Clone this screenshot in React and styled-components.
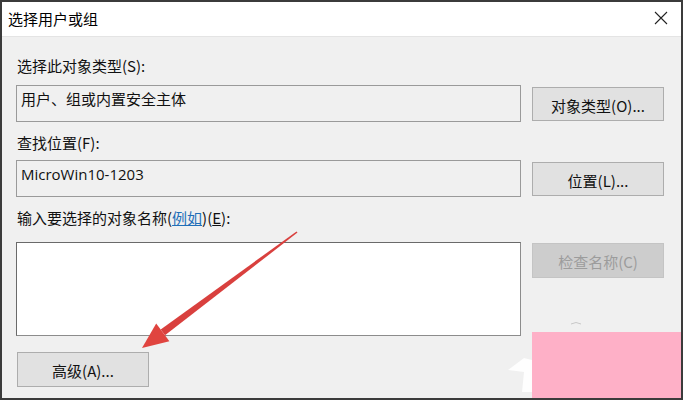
import React from 'react'
import styled, { createGlobalStyle } from 'styled-components'

const Global = createGlobalStyle`
  html, body { margin: 0; padding: 0; background: #3a3a3a; }
  body { font-family: "Noto Sans CJK SC", "Noto Sans", sans-serif; }
`;

const Window = styled.div`
  position: relative;
  width: 683px;
  height: 400px;
  box-sizing: border-box;
  border: 2px solid #3b3b3b;
  background: #f0f0f0;
  display: flex;
  flex-direction: column;
  overflow: hidden;
  color: #111;
`;

const TitleBar = styled.div`
  height: 34px;
  flex: none;
  background: #ffffff;
  border-bottom: 1px solid #e4e4e4;
  display: flex;
  align-items: center;
  justify-content: space-between;
  padding: 0 13px 0 6px;
`;

const Title = styled.div`
  font-size: 15px;
  line-height: 20px;
  color: #000;
`;

const Close = styled.svg`
  width: 14px;
  height: 14px;
  margin-top: -2px;
`;

const Body = styled.div`
  flex: 1;
  padding: 0 17px 0 14px;
  display: flex;
  flex-direction: column;
`;

const Label = styled.div`
  font-size: 15px;
  line-height: 20px;
  margin-top: ${p => p.top}px;
  padding-left: 1px;
`;

const Link = styled.span`
  color: #1f6fb8;
  text-decoration: underline;
`;

const Key = styled.span`
  text-decoration: underline;
`;

const Row = styled.div`
  display: flex;
  gap: 11px;
  align-items: flex-start;
  margin-top: ${p => p.top}px;
`;

const Field = styled.div`
  width: 505px;
  height: ${p => p.h || 37}px;
  box-sizing: border-box;
  border: 1px solid ${p => (p.edit ? '#8c8c8c' : '#9a9a9a')};
  border-top-color: ${p => (p.edit ? '#6a6a6a' : '#9a9a9a')};
  border-left-color: ${p => (p.edit ? '#6a6a6a' : '#9a9a9a')};
  background: ${p => (p.edit ? '#ffffff' : '#f0f0f0')};
  font-family: "Open Sans", "Noto Sans CJK SC", sans-serif;
  font-size: 15px;
  line-height: 20px;
  padding: 3px 4px;
`;

const Button = styled.div`
  width: 132px;
  height: ${p => p.h || 34}px;
  box-sizing: border-box;
  margin-top: ${p => p.mt || 0}px;
  border: 1px solid ${p => (p.disabled ? '#c4c4c4' : '#adadad')};
  background: ${p => (p.disabled ? '#cdcdcd' : '#e1e1e1')};
  color: ${p => (p.disabled ? '#9c9c9c' : '#111')};
  font-size: 15px;
  display: flex;
  align-items: center;
  justify-content: center;
  padding-top: 2px;
`;

const Footer = styled.div`
  margin-top: 16px;
  padding-left: 1px;
`;

const Overlay = styled.svg`
  position: absolute;
  left: -2px;
  top: -2px;
  width: 683px;
  height: 400px;
  pointer-events: none;
`;

const Watermark = styled.div`
  position: absolute;
  right: 0;
  bottom: -2px;
  width: 149px;
  height: 68px;
  background: #feb0c7;
`;

function arrowPoints() {
  const tail = [297, 232]
  const tip = [142, 348]
  const dx = tip[0] - tail[0], dy = tip[1] - tail[1]
  const len = Math.hypot(dx, dy)
  const u = [dx / len, dy / len]
  const n = [-u[1], u[0]]
  const base = [tip[0] - 26 * u[0], tip[1] - 26 * u[1]]
  const p = (c, w) => `${(c[0] + n[0] * w).toFixed(1)},${(c[1] + n[1] * w).toFixed(1)}`
  const shaft = [p(tail, 0.8), p(base, 3.6), p(base, -3.6), p(tail, -0.8)].join(' ')
  const head = [p(base, 11), `${tip[0]},${tip[1]}`, p(base, -11)].join(' ')
  return { shaft, head }
}

export default function App() {
  const { shaft, head } = arrowPoints()
  return (
    <>
      <Global />
      <Window>
        <TitleBar>
          <Title>选择用户或组</Title>
          <Close viewBox="0 0 14 14">
            <path d="M1 1 L13 13 M13 1 L1 13" stroke="#222" strokeWidth="1.1" fill="none" />
          </Close>
        </TitleBar>
        <Body>
          <Label top={19}>选择此对象类型(S):</Label>
          <Row top={9}>
            <Field>用户、组或内置安全主体</Field>
            <Button mt={2}>对象类型(O)...</Button>
          </Row>
          <Label top={11}>查找位置(F):</Label>
          <Row top={7}>
            <Field>MicroWin10-1203</Field>
            <Button mt={2}>位置(L)...</Button>
          </Row>
          <Label top={11}>
            输入要选择的对象名称(<Link>例如</Link>)(<Key>E</Key>):
          </Label>
          <Row top={14}>
            <Field edit h={94} />
            <Button disabled mt={1} h={35}>检查名称(C)</Button>
          </Row>
          <Footer>
            <Button h={35}>高级(A)...</Button>
          </Footer>
        </Body>
        <Watermark />
        <Overlay viewBox="0 0 683 400">
          <path d="M508 370 L524 358 L532 360 L532 392 L522 392 L524 372 Z" fill="#ffffff" opacity="0.9" />
          <path d="M571 324 Q576 321 581 324" stroke="#c8c8c8" strokeWidth="1" fill="none" />
          <polygon points={shaft} fill="#d9403e" />
          <polygon points={head} fill="#e0443f" />
        </Overlay>
      </Window>
    </>
  )
}
